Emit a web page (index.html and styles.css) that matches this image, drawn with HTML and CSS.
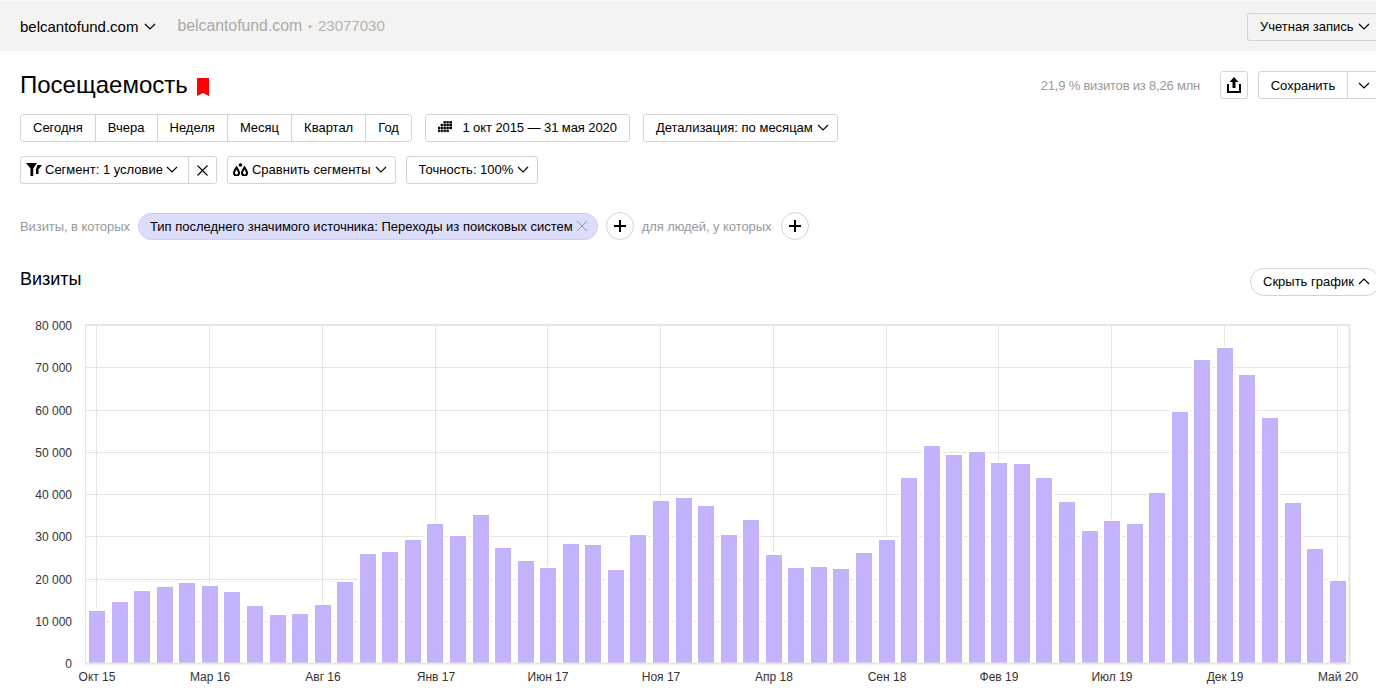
FILE: index.html
```html
<!DOCTYPE html>
<html lang="en">
<head>
    <meta charset="UTF-8">
    <meta name="viewport" content="width=device-width, initial-scale=1.0">
    <title>Посещаемость</title>
    <link rel="stylesheet" href="styles.css">
</head>
<body>
    <svg class="sprite" width="0" height="0">
        <symbol id="down" viewBox="0 0 12 7"><path d="M1 1l5 5 5-5" fill="none" stroke="currentColor" stroke-width="1.200"/></symbol>
        <symbol id="up" viewBox="0 0 12 7"><path d="M1 6l5-5 5 5" fill="none" stroke="currentColor" stroke-width="1.200"/></symbol>
        <symbol id="plus" viewBox="0 0 12 12"><path d="M6 0v12M0 6h12" fill="none" stroke="currentColor" stroke-width="2"/></symbol>
    </svg>

    <header class="topbar">
        <span class="site-name">belcantofund.com</span>
        <svg class="chevron chevron-big"><use href="#down"/></svg>
        <span class="site-id"><b>belcantofund.com</b> <i>•</i> 23077030</span>
        <button class="btn account">Учетная запись <svg class="chevron"><use href="#down"/></svg></button>
    </header>

    <main class="page">
        <div class="title-row">
            <h1>Посещаемость</h1>
            <svg class="bookmark" viewBox="0 0 12 18"><path d="M0 0h12v18l-6-3-6 3z" fill="#f00"/></svg>
            <span class="sample">21,9 % визитов из 8,26 млн</span>
            <button class="btn share">
                <svg width="14" height="16" viewBox="0 0 14 16"><path d="M7 0l4.500 5H8.500v6h-3V5H2.500z" fill="#000"/><path d="M1 7v8h12V7" fill="none" stroke="#000" stroke-width="2"/></svg>
            </button>
            <div class="btn-group save-group">
                <button class="btn save">Сохранить</button>
                <button class="btn save-more"><svg class="chevron"><use href="#down"/></svg></button>
            </div>
        </div>

        <div class="controls">
            <div class="btn-group">
                <button class="btn">Сегодня</button>
                <button class="btn">Вчера</button>
                <button class="btn">Неделя</button>
                <button class="btn">Месяц</button>
                <button class="btn">Квартал</button>
                <button class="btn">Год</button>
            </div>
            <button class="btn date">
                <svg width="15" height="12" viewBox="0 0 15 12"><path d="M6 0h2v2H6zM9 0h2v2H9zM12 0h3v2h-3zM3 3h2v2H3zM6 3h2v2H6zM9 3h2v2H9zM12 3h3v2h-3zM0 6h2v2H0zM3 6h2v2H3zM6 6h2v2H6zM9 6h2v2H9zM12 6h3v2h-3zM0 9h2v2H0zM3 9h2v2H3zM6 9h2v2H6zM9 9h2v2H9z" fill="#000" stroke="#000" stroke-width=".5"/></svg>
                1 окт 2015 — 31 мая 2020
            </button>
            <button class="btn has-chevron">Детализация: по месяцам <svg class="chevron"><use href="#down"/></svg></button>
        </div>

        <div class="controls controls-second">
            <div class="btn-group">
                <button class="btn segment">
                    <svg width="16" height="13" viewBox="0 0 16 13"><path d="M0 0h11L7.200 5.500V13H4.500V5.500z" fill="#000"/><path d="M11.500 2H16l-3.500 4.500V11H10V6z" fill="#000"/></svg>
                    Сегмент: 1 условие <svg class="chevron"><use href="#down"/></svg>
                </button>
                <button class="btn clear">
                    <svg width="11" height="11" viewBox="0 0 11 11"><path d="M.5.500l10 10M10.500.500l-10 10" fill="none" stroke="#000" stroke-width="1.100"/></svg>
                </button>
            </div>
            <button class="btn segment compare">
                <svg width="15" height="13" viewBox="0 0 15 13"><path d="M3.500 4.500C2.200 6.700 1 8 1 10a2.500 2.500 0 0 0 5 0C6 8 4.800 6.700 3.500 4.500z M11.500 4.500c-1.300 2.200-2.500 3.500-2.500 5.500a2.500 2.500 0 0 0 5 0c0-2-1.200-3.300-2.500-5.500z" fill="none" stroke="#000" stroke-width="2"/><circle cx="7.500" cy="2" r="1.800" fill="#000"/></svg>
                Сравнить сегменты <svg class="chevron"><use href="#down"/></svg>
            </button>
            <button class="btn has-chevron">Точность: 100% <svg class="chevron"><use href="#down"/></svg></button>
        </div>

        <div class="filter-row">
            <span class="muted">Визиты, в которых</span>
            <span class="pill">Тип последнего значимого источника: Переходы из поисковых систем
                <svg width="10" height="10" viewBox="0 0 10 10"><path d="M0 0l10 10M10 0L0 10" fill="none" stroke="#8a8a99" stroke-width=".9"/></svg>
            </span>
            <button class="add"><svg width="12" height="12"><use href="#plus"/></svg></button>
            <span class="muted people">для людей, у которых</span>
            <button class="add"><svg width="12" height="12"><use href="#plus"/></svg></button>
        </div>

        <div class="chart-head">
            <h2>Визиты</h2>
            <button class="btn hide-chart">Скрыть график <svg class="chevron"><use href="#up"/></svg></button>
        </div>
    </main>

    <svg id="chart" class="chart" width="1376" height="385" viewBox="0 310 1376 385"></svg>

    <script src="chart.js"></script>
</body>
</html>
```

FILE: styles.css
```css
html, body {
    margin: 0;
    padding: 0;
    height: 695px;
    overflow: hidden;
    background: #fff;
}

body {
    font-family: "Liberation Sans", Arial, sans-serif;
    font-size: 13px;
    color: #000;
}

.sprite {
    position: absolute;
}

.topbar {
    display: flex;
    align-items: center;
    width: 1380px;
    height: 51px;
    box-sizing: border-box;
    padding-left: 20px;
    background: #f4f3f1;
    border-top: 1px solid #f9f9f8;
    font-size: 15px;
}

.site-id {
    margin-left: 21px;
    color: #b3b3b3;
}

.site-id b {
    font-weight: normal;
    font-size: 15.800px;
    color: #aaa;
}

.site-id i {
    font-style: normal;
    font-size: 10px;
    vertical-align: 1px;
    margin: 0 2px;
}

.chevron {
    flex: none;
    width: 12px;
    height: 7px;
    color: #000;
}

.chevron-big {
    margin-left: 6px;
}

.page {
    width: 1380px;
    box-sizing: border-box;
    padding-left: 20px;
}

.btn {
    display: inline-flex;
    align-items: center;
    justify-content: center;
    gap: 4px;
    height: 28px;
    box-sizing: border-box;
    padding: 0 12px;
    background: #fff;
    border: 1px solid #d3d3d3;
    border-radius: 3px;
    font: inherit;
    font-size: 13px;
    color: #000;
    white-space: nowrap;
}

.account {
    margin-left: auto;
    margin-top: 1px;
    width: 133px;
    background: #f4f3f1;
    justify-content: flex-start;
}

.btn-group {
    display: inline-flex;
}

.btn-group .btn {
    border-radius: 0;
    margin-left: -1px;
}

.btn-group .btn:first-child {
    margin-left: 0;
    border-radius: 3px 0 0 3px;
}

.btn-group .btn:last-child {
    border-radius: 0 3px 3px 0;
}

.title-row {
    display: flex;
    align-items: center;
    height: 28px;
    margin-top: 20px;
}

h1 {
    margin: 0;
    font-size: 24px;
    font-weight: normal;
    line-height: 28px;
}

.bookmark {
    width: 12px;
    height: 18px;
    margin: 3px 0 0 9px;
}

.sample {
    margin-left: auto;
    margin-right: 20px;
    color: #999;
    letter-spacing: -.2px;
}

.share {
    width: 28px;
    padding: 0;
    margin-right: 10px;
}

.save-group {
    width: 122px;
}

.save {
    width: 90px;
}

.save-more {
    flex: 1;
    padding: 0;
}

.controls {
    display: flex;
    gap: 13px;
    margin-top: 15px;
}

.controls .btn {
    padding-bottom: 2px;
}

.controls .date {
    width: 205px;
    gap: 10px;
    letter-spacing: -.08px;
}

.controls .has-chevron {
    padding-right: 8px;
}

.controls-second {
    gap: 10px;
    margin-top: 14px;
}

.controls .segment {
    gap: 3px;
    padding: 0 10px 2px 5px;
}

.controls .compare {
    gap: 4px;
    padding-right: 8px;
}

.controls .clear {
    width: 29px;
    padding: 0;
}

.filter-row {
    display: flex;
    align-items: center;
    height: 28px;
    margin-top: 28px;
}

.muted {
    color: #999;
    letter-spacing: -.07px;
}

.pill {
    display: inline-flex;
    align-items: center;
    gap: 4px;
    height: 27px;
    box-sizing: border-box;
    margin: 0 8px;
    padding: 0 10px 0 11px;
    background: #dcdcfb;
    border: 1px solid #cdcdf0;
    border-radius: 14px;
}

.add {
    display: flex;
    align-items: center;
    justify-content: center;
    width: 28px;
    height: 28px;
    padding: 0;
    background: #fff;
    border: 1px solid #d3d3d3;
    border-radius: 50%;
    color: #000;
}

.people {
    margin: 0 10px 0 8px;
}

.chart-head {
    display: flex;
    justify-content: space-between;
    align-items: center;
    height: 28px;
    margin-top: 28px;
}

h2 {
    margin: 0 0 6px;
    font-size: 18px;
    font-weight: normal;
}

.hide-chart {
    width: 130px;
    padding: 0 0 2px 12px;
    border-radius: 14px;
    justify-content: flex-start;
}

.chart {
    display: block;
    margin-top: 14px;
}

.chart text {
    font-size: 12px;
    fill: #333;
}

.grid-line {
    stroke: #e5e5e5;
    stroke-width: 1;
}

.frame-line {
    stroke: #e5e5e5;
    stroke-width: 2;
}

.bar {
    fill: #c4b2fa;
    stroke: #fff;
    stroke-width: 4;
    paint-order: stroke;
}
```

FILE: chart.js
```js
const visits = [
    12308, 14438, 17041, 17988, 18935, 18225, 16805, 13491, 11361, 11598, 13728, 19172,
    25799, 26272, 29112, 32899, 30059, 35030, 27219, 24142, 22485, 28166, 27929, 22012,
    30296, 38343, 39054, 37160, 30296, 33846, 25562, 22485, 22722, 22249, 26036, 29112,
    43787, 51361, 49231, 49941, 47337, 47101, 43787, 38107, 31243, 33609, 32899, 40237,
    59408, 71716, 74556, 68166, 57988, 37870, 26982, 19408
];
const monthLabels = ["Окт 15", "Мар 16", "Авг 16", "Янв 17", "Июн 17", "Ноя 17", "Апр 18", "Сен 18", "Фев 19", "Июл 19", "Дек 19", "Май 20"];

const plotLeft = 85, plotRight = 1349, plotTop = 325, plotBottom = 663;
const chart = document.getElementById("chart");
let html = "";

function line(x1, y1, x2, y2, cls) {
    return `<line class="${cls}" x1="${x1}" y1="${y1}" x2="${x2}" y2="${y2}"/>`;
}

for (let i = 1; i < 8; i++) {
    const y = Math.round(plotTop + 42.25 * i) + 0.5;
    html += line(plotLeft, y, plotRight, y, "grid-line");
}

monthLabels.forEach((label, i) => {
    const x = Math.round(96.2 + 112.77 * i) + 0.5;
    html += line(x, plotTop, x, plotBottom, "grid-line");
    html += `<text x="${x + 0.5}" y="681" text-anchor="middle">${label}</text>`;
});

visits.forEach((value, i) => {
    const x = Math.round(89.15 + 22.555 * i);
    const y = Math.round(plotBottom - value * 0.004225);
    html += `<rect class="bar" x="${x}" y="${y}" width="16" height="${plotBottom - y}"/>`;
});

html += line(plotLeft, plotTop, plotRight + 1, plotTop, "frame-line");
html += line(plotLeft + 0.5, plotTop, plotLeft + 0.5, plotBottom, "grid-line");
html += line(plotRight + 0.5, plotTop, plotRight + 0.5, plotBottom, "frame-line");
html += line(plotLeft, plotBottom + 0.5, plotRight + 1, plotBottom + 0.5, "frame-line");

for (let i = 0; i <= 8; i++) {
    const y = Math.round(plotBottom - 42.25 * i);
    const label = i === 0 ? "0" : `${i * 10} 000`;
    html += `<text x="72" y="${y + 4.5}" text-anchor="end">${label}</text>`;
}

chart.innerHTML = html;
```
